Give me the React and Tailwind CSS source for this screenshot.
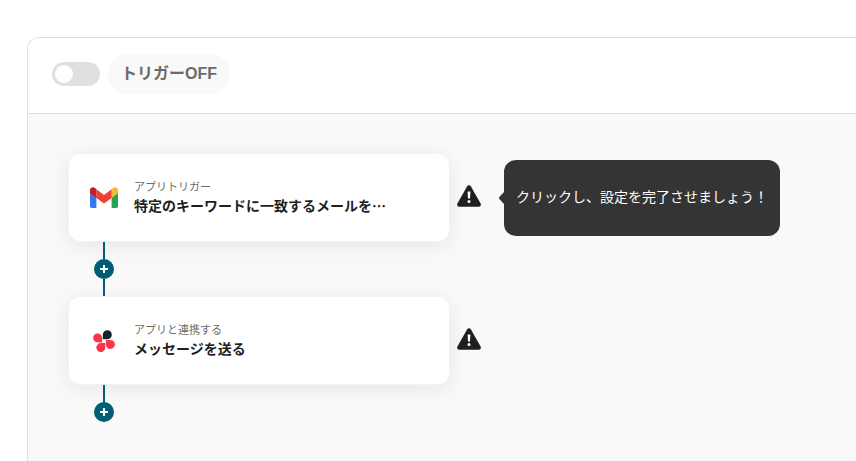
import { useState } from "react";

const STEPS = [
  {
    id: "trigger",
    icon: "gmail",
    kind: "アプリトリガー",
    title: "特定のキーワードに一致するメールを…",
    hint: "クリックし、設定を完了させましょう！",
  },
  {
    id: "action",
    icon: "petals",
    kind: "アプリと連携する",
    title: "メッセージを送る",
  },
];

const GmailIcon = () => (
  <svg viewBox="0 0 28 21" className="h-[21px] w-7" aria-hidden="true">
    <path d="M0 4.5l6.4 4.8V21H2a2 2 0 0 1-2-2z" fill="#3478ee" />
    <path d="M28 4.5l-6.4 4.8V21H26a2 2 0 0 0 2-2z" fill="#23a455" />
    <path d="M21.6 2.2L23 1.1c2-1.7 5-.4 5 2.2v2.9l-6.4 4.8z" fill="#fbb632" />
    <path d="M6.4 11V2.2L14 7.9l7.6-5.7V11L14 16.6z" fill="#ee4036" />
    <path d="M0 3.3C0 .7 3 -.6 5 1.1l1.4 1.1V11L0 6.2z" fill="#c5221f" />
  </svg>
);

const PetalsIcon = () => (
  <svg viewBox="0 0 22 22" className="h-[22px] w-[22px]" aria-hidden="true">
    <path d="M9.8 9.2V4.6A4.5 4.5 0 1 1 14.3 9.2z" fill="#15202e" />
    <path d="M9.1 12.4H4.5A4.5 4.5 0 1 1 9.1 7.8z" fill="#fa3549" />
    <path d="M12.9 9.9h4.6a4.5 4.5 0 1 1-4.6 4.6z" fill="#fa3549" />
    <path d="M12.3 13.1v4.5a4.5 4.5 0 1 1-4.5-4.5z" fill="#fa3549" />
  </svg>
);

const WarningIcon = () => (
  <svg viewBox="0 0 24 22" className="h-[22px] w-6" aria-hidden="true">
    <path
      d="M10.2 1.2a2.1 2.1 0 0 1 3.6 0l9.8 17.4a2.1 2.1 0 0 1-1.8 3.1H2.2a2.1 2.1 0 0 1-1.8-3.1z"
      fill="#1f1f1f"
    />
    <path d="M10.6 6.6h2.8l-.4 6.8h-2z" fill="#fff" />
    <circle cx="12" cy="16.4" r="1.5" fill="#fff" />
  </svg>
);

const StepCard = ({ step }) => (
  <div className="flex items-center">
    <button
      type="button"
      className="flex h-[89px] w-[382px] shrink-0 items-center gap-[11px] rounded-xl border border-[#f3f3f3] bg-white px-4 text-left shadow-[0_4px_20px_rgba(0,0,0,0.08)]"
    >
      <span className="flex w-[38px] shrink-0 justify-center">
        {step.icon === "gmail" ? <GmailIcon /> : <PetalsIcon />}
      </span>
      <span className="flex min-w-0 flex-col pb-0.5">
        <span className="text-[11px] leading-4 text-[#6b6b6b]">{step.kind}</span>
        <span className="truncate text-sm leading-[22px] font-bold text-[#1f1f1f]">
          {step.title}
        </span>
      </span>
    </button>
    <button type="button" aria-label="設定が未完了です" className="ml-[7px] shrink-0 pb-1">
      <WarningIcon />
    </button>
    {step.hint && (
      <div role="tooltip" className="ml-[18px] flex shrink-0 items-center">
        {/* Arrow pointing back at the warning */}
        <svg viewBox="0 0 5 12" className="h-3 w-[5px]" aria-hidden="true">
          <path d="M5 0v12L.6 7.2a1.8 1.8 0 0 1 0-2.4z" fill="#343434" />
        </svg>
        <div className="flex h-[76px] w-[276px] items-center rounded-xl bg-[#343434] px-3 pb-1 text-sm whitespace-nowrap text-white">
          {step.hint}
        </div>
      </div>
    )}
  </div>
);

const Connector = ({ last }) => (
  <div className="ml-[26px] flex w-5 flex-col items-center">
    <div className="h-[17px] w-0.5 bg-[#005e74]"></div>
    <button
      type="button"
      aria-label="ステップを追加"
      className="flex size-5 items-center justify-center rounded-full bg-[#005e74]"
    >
      <svg viewBox="0 0 8 8" className="size-2" aria-hidden="true">
        <path d="M4 .8v6.4M.8 4h6.4" stroke="#fff" strokeWidth="2" strokeLinecap="round" />
      </svg>
    </button>
    {!last && <div className="h-[17px] w-0.5 bg-[#005e74]"></div>}
  </div>
);

const App = () => {
  const [enabled, setEnabled] = useState(false);

  return (
    <div
      lang="ja"
      className="flex min-h-screen flex-col overflow-hidden bg-white pt-[37px] pl-[27px] font-['Noto_Sans_CJK_JP',sans-serif]"
    >
      <main className="flex flex-1 flex-col overflow-hidden rounded-tl-xl border-t border-l border-[#dfdfdf]">
        {/* Trigger switch */}
        <header className="flex h-[76px] shrink-0 items-center gap-2 border-b border-[#dfdfdf] bg-white px-6 pb-[3px]">
          <input
            id="trigger-switch"
            type="checkbox"
            role="switch"
            checked={enabled}
            onChange={(e) => setEnabled(e.target.checked)}
            className="flex h-6 w-12 cursor-pointer appearance-none items-center rounded-full bg-[#e0e0e0] px-[3px] before:size-[18px] before:rounded-full before:bg-white checked:justify-end checked:bg-[#005e74]"
          />
          <label
            htmlFor="trigger-switch"
            className="flex h-10 min-w-[122px] items-center justify-center rounded-full bg-[#f9f9f9] px-3 font-['Liberation_Sans','Noto_Sans_CJK_JP',sans-serif] text-base font-bold text-[#6b6b6b]"
          >
            トリガー{enabled ? "ON" : "OFF"}
          </label>
        </header>

        {/* Flow */}
        <section className="flex-1 bg-[#f9f9f9] px-10 pt-[39px] pb-10">
          {STEPS.map((step, i) => (
            <div key={step.id}>
              <StepCard step={step} />
              <Connector last={i === STEPS.length - 1} />
            </div>
          ))}
        </section>
      </main>
    </div>
  );
};

export default App;
